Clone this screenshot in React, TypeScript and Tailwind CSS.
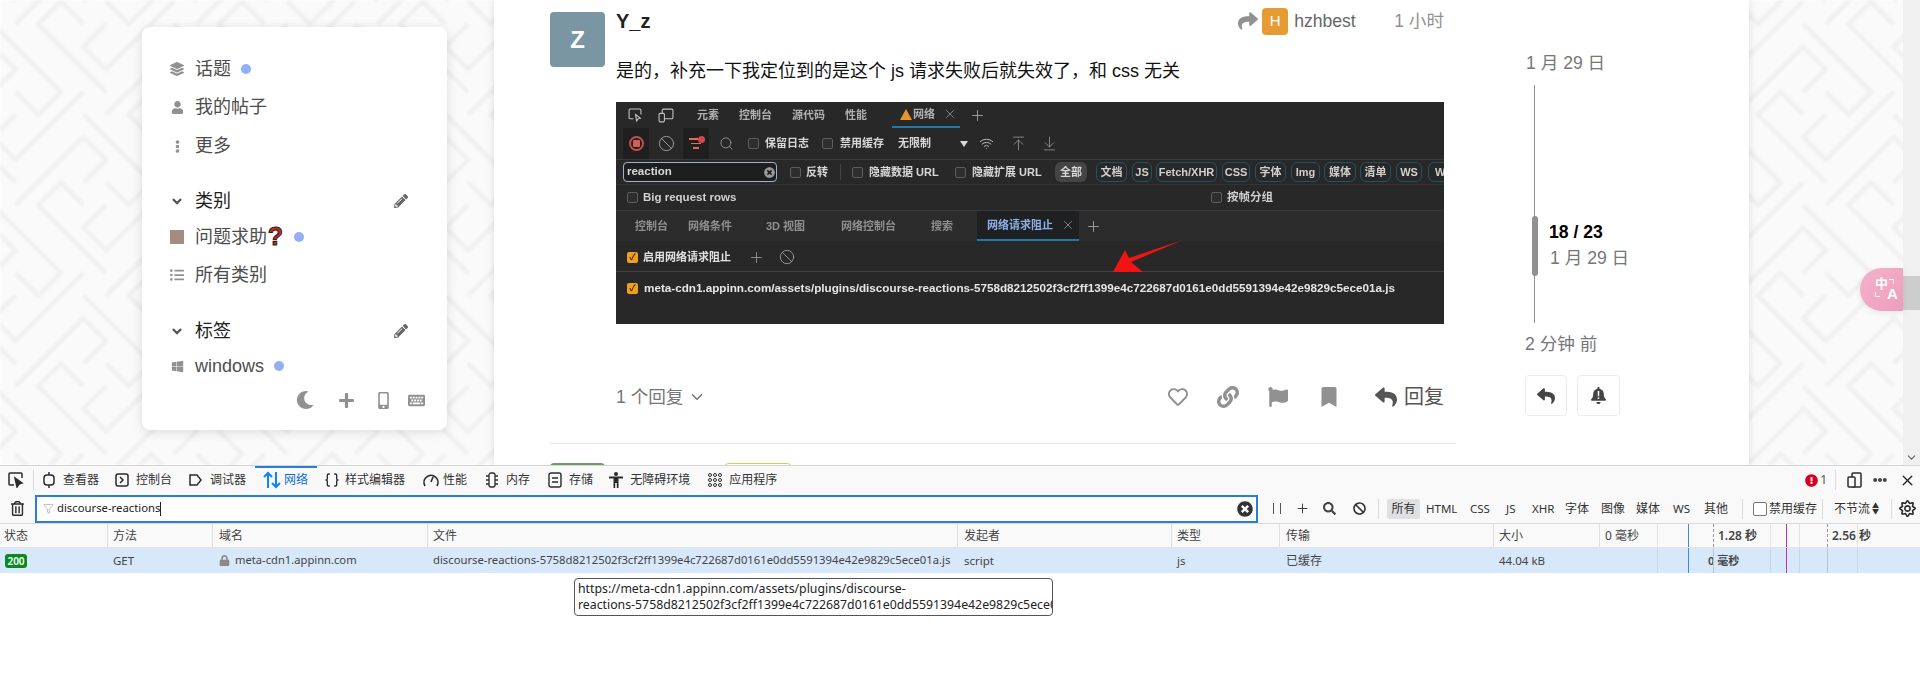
import React from "react";
import {
  FaLayerGroup, FaUser, FaEllipsisV, FaAngleDown, FaPencilAlt, FaListUl, FaWindows, FaMoon, FaPlus,
  FaMobileAlt, FaKeyboard, FaShare, FaRegHeart, FaLink, FaFlag, FaBookmark, FaReply, FaBell, FaLock, FaRegSun, FaRegTrashAlt,
  FaSearch, FaBan, FaEllipsisH, FaExclamationCircle, FaTimesCircle,
} from "react-icons/fa";
import { Plus, X, Search, Ban, ArrowUpToLine, ArrowDownToLine, Wifi, Filter, Braces, ChevronDown } from "lucide-react";

const Dot = () => <span className="w-[10px] h-[10px] rounded-full bg-[#95aef8] shrink-0" />;

function NavRow({ icon, label, dot, mt, dark }: { icon: React.ReactNode; label: React.ReactNode; dot?: boolean; mt: string; dark?: boolean }) {
  return (
    <div className={`flex items-center h-[30px] ${mt}`}>
      <span className="w-[14px] flex justify-center text-[#919191] shrink-0">{icon}</span>
      <span className={`ml-[11px] text-[18px] leading-[30px] ${dark ? "text-[#222222]" : "text-[#4d4d4d]"}`}>{label}</span>
      {dot && <span className="ml-[10px] flex"><Dot /></span>}
    </div>
  );
}

function Sidebar() {
  return (
    <aside className="w-[305px] h-[403px] mt-[27px] bg-white rounded-[8px] shadow-[0_2px_12px_rgba(0,0,0,0.12)] shrink-0 pl-[28px] pr-[39px] pt-[27px] flex flex-col relative z-10">
      <NavRow mt="" icon={<FaLayerGroup size={14} />} label="话题" dot />
      <NavRow mt="mt-[8px]" icon={<FaUser size={13} />} label="我的帖子" />
      <NavRow mt="mt-[9px]" icon={<FaEllipsisV size={13} />} label="更多" />
      <div className="flex items-center justify-between h-[30px] mt-[25px]">
        <div className="flex items-center">
          <span className="w-[14px] flex justify-center text-[#555555]"><FaAngleDown size={15} /></span>
          <span className="ml-[11px] text-[18px] text-[#222222]">类别</span>
        </div>
        <FaPencilAlt size={14} className="text-[#666666]" />
      </div>
      <NavRow
        mt="mt-[6px]"
        icon={<span className="w-[14px] h-[14px] bg-[#a48c80] block" />}
        label={<>问题求助<span className="inline-block w-[17px] text-center font-bold text-[#c9261c] text-[25px] leading-[20px] [-webkit-text-stroke:1px_#222222] align-[-2px]">?</span></>}
        dot
      />
      <NavRow mt="mt-[8px]" icon={<FaListUl size={14} />} label="所有类别" />
      <div className="flex items-center justify-between h-[30px] mt-[26px]">
        <div className="flex items-center">
          <span className="w-[14px] flex justify-center text-[#555555]"><FaAngleDown size={15} /></span>
          <span className="ml-[11px] text-[18px] text-[#222222]">标签</span>
        </div>
        <FaPencilAlt size={14} className="text-[#666666]" />
      </div>
      <NavRow mt="mt-[5px]" icon={<FaWindows size={13} />} label="windows" dot />
      <div className="flex items-center justify-end text-[#919191] mt-[7px] -mr-[17px] h-[24px]">
        <FaMoon size={18} />
        <span className="ml-[24px]"><FaPlus size={17} /></span>
        <span className="ml-[20px]"><FaMobileAlt size={17} /></span>
        <span className="ml-[16px]"><FaKeyboard size={17} /></span>
      </div>
    </aside>
  );
}

const CB = ({ on, ml }: { on?: boolean; ml: string }) => (
  <span className={`${ml} w-[11px] h-[11px] rounded-[2px] shrink-0 flex items-center justify-center text-[9px] leading-none ${on ? "bg-[#f0a020] text-[#3a2800]" : "border border-[#5d5d5d] bg-[#2e2e2e]"}`}>{on ? "✓" : ""}</span>
);

function Chip({ w, ml, children }: { w: string; ml: string; children: React.ReactNode }) {
  return <span className={`${w} ${ml} h-[20px] shrink-0 rounded-[6px] border border-[#1f5365] flex items-center justify-center text-[#cfcfcf] font-semibold`}>{children}</span>;
}

function DarkShot() {
  return (
    <div className="w-[828px] h-[222px] bg-[#282828] text-[11px] text-[#b0b0b0] font-semibold overflow-hidden flex flex-col blur-[0.3px] relative">
      <div className="h-[26px] flex items-center shrink-0">
        <svg className="ml-[12px] shrink-0" width="14" height="14" viewBox="0 0 13 13" fill="none" stroke="#c4c4c4"><path d="M5 10H2a1 1 0 0 1-1-1V2a1 1 0 0 1 1-1h9a1 1 0 0 1 1 1v4" /><path d="M7 6l1 6 1.5-2 2-.5z" /></svg>
        <svg className="ml-[16px] shrink-0" width="16" height="15" viewBox="0 0 15 14" fill="none" stroke="#c4c4c4"><rect x="4" y="1" width="10" height="9" rx="1" /><rect x="1" y="5" width="5" height="8" rx="1" fill="#282828" /></svg>
        <span className="ml-[23px] w-[22px] shrink-0">元素</span>
        <span className="ml-[20px] w-[33px] shrink-0">控制台</span>
        <span className="ml-[20px] w-[33px] shrink-0">源代码</span>
        <span className="ml-[20px] w-[22px] shrink-0">性能</span>
        <div className="ml-[25px] w-[68px] h-full border-b-[2px] border-[#2279a8] pl-[8px] flex items-center shrink-0">
          <span className="w-0 h-0 border-l-[6px] border-r-[6px] border-b-[11px] border-l-transparent border-r-transparent border-b-[#e8942a]" />
          <span className="ml-[1px] w-[23px]">网络</span>
          <X size={14} className="ml-[7px] text-[#aaaaaa]" strokeWidth={1.2} />
        </div>
        <Plus size={17} className="ml-[9px] text-[#aaaaaa]" strokeWidth={1.2} />
      </div>
      <div className="h-[32px] flex items-center border-b border-[#3a3a3a] shrink-0">
        <span className="ml-[7px] w-[26px] h-full bg-[#1f1f1f] flex items-center justify-center shrink-0"><span className="w-[15px] h-[15px] rounded-full border-2 border-[#c2504a] flex items-center justify-center"><span className="w-[7px] h-[7px] bg-[#d0605a] rounded-[1px]" /></span></span>
        <Ban size={17} className="ml-[9px] text-[#aaaaaa] shrink-0" strokeWidth={1.2} />
        <span className="ml-[8px] w-[26px] h-full bg-[#1f1f1f] flex flex-col items-center justify-center gap-[3px] shrink-0 relative"><span className="w-[14px] h-[1.5px] bg-[#e26a5a]" /><span className="w-[10px] h-[1.5px] bg-[#e26a5a]" /><span className="w-[6px] h-[1.5px] bg-[#e26a5a]" /><span className="absolute right-[4px] top-[8px] w-[7px] h-[7px] rounded-full bg-[#d8484a]" /></span>
        <Search size={15} className="ml-[10px] text-[#aaaaaa] shrink-0" strokeWidth={1.2} />
        <CB ml="ml-[14px]" />
        <span className="ml-[6px] w-[45px] shrink-0 text-[#d8d8d8]">保留日志</span>
        <CB ml="ml-[12px]" />
        <span className="ml-[7px] w-[45px] shrink-0 text-[#d8d8d8]">禁用缓存</span>
        <span className="ml-[13px] w-[34px] shrink-0 text-[#d8d8d8]">无限制</span>
        <span className="ml-[28px] w-0 h-0 border-l-[4px] border-r-[4px] border-t-[6px] border-l-transparent border-r-transparent border-t-[#d8d8d8] shrink-0" />
        <Wifi size={15} className="ml-[11px] text-[#c0c0c0] shrink-0" strokeWidth={1.5} />
        <ArrowUpToLine size={17} className="ml-[16px] text-[#aaaaaa] shrink-0" strokeWidth={1} />
        <ArrowDownToLine size={17} className="ml-[14px] text-[#aaaaaa] shrink-0" strokeWidth={1} />
      </div>
      <div className="h-[25px] flex items-center shrink-0 border-b border-[#333333]">
        <span className="ml-[7px] w-[154px] h-[20px] shrink-0 rounded-[4px] border border-[#9fb3cf] bg-[#1e1e1e] pl-[3px] pr-[1px] flex items-center justify-between text-[#d8d8d8] text-[11.5px]">reaction<FaTimesCircle size={11} className="text-[#9a9a9a]" /></span>
        <CB ml="ml-[13px]" />
        <span className="ml-[5px] w-[23px] shrink-0 text-[#d8d8d8]">反转</span>
        <span className="ml-[11px] w-px h-[16px] bg-[#444444] shrink-0" />
        <CB ml="ml-[11px]" />
        <span className="ml-[6px] w-[72px] shrink-0 text-[#d8d8d8] whitespace-nowrap">隐藏数据 URL</span>
        <CB ml="ml-[14px]" />
        <span className="ml-[6px] w-[72px] shrink-0 text-[#d8d8d8] whitespace-nowrap">隐藏扩展 URL</span>
        <span className="ml-[11px] w-[32px] h-[20px] shrink-0 rounded-[6px] bg-[#454545] flex items-center justify-center text-[#d8d8d8]">全部</span>
        <Chip ml="ml-[9px]" w="w-[31px]">文档</Chip>
        <Chip ml="ml-[5px]" w="w-[20px]">JS</Chip>
        <Chip ml="ml-[4px]" w="w-[61px]">Fetch/XHR</Chip>
        <Chip ml="ml-[5px]" w="w-[28px]">CSS</Chip>
        <Chip ml="ml-[5px]" w="w-[31px]">字体</Chip>
        <Chip ml="ml-[5px]" w="w-[29px]">Img</Chip>
        <Chip ml="ml-[4px]" w="w-[32px]">媒体</Chip>
        <Chip ml="ml-[4px]" w="w-[31px]">清单</Chip>
        <Chip ml="ml-[5px]" w="w-[26px]">WS</Chip>
        <Chip ml="ml-[6px]" w="w-[30px]">Wa</Chip>
      </div>
      <div className="h-[26px] flex items-center shrink-0 border-b border-[#3a3a3a] text-[#d0d0d0] text-[11.5px]">
        <CB ml="ml-[11px]" />
        <span className="ml-[5px] w-[568px] shrink-0">Big request rows</span>
        <CB ml="ml-0" />
        <span className="ml-[5px] shrink-0">按帧分组</span>
      </div>
      <div className="h-[30px] flex items-center shrink-0 bg-[#2c2c2c] text-[#8f8f8f]">
        <span className="ml-[19px] w-[33px] shrink-0">控制台</span>
        <span className="ml-[20px] w-[44px] shrink-0">网络条件</span>
        <span className="ml-[34px] w-[42px] shrink-0 whitespace-nowrap">3D 视图</span>
        <span className="ml-[33px] w-[56px] shrink-0">网络控制台</span>
        <span className="ml-[34px] w-[23px] shrink-0">搜索</span>
        <div className="ml-[23px] w-[102px] h-full shrink-0 bg-[#1f2022] border-b-[2px] border-[#2279a8] pl-[10px] flex items-center text-[#8db0ea]">
          <span className="w-[67px] shrink-0">网络请求阻止</span>
          <X size={14} className="ml-[7px] text-[#aaaaaa] shrink-0" strokeWidth={1.2} />
        </div>
        <Plus size={17} className="ml-[6px] text-[#aaaaaa] shrink-0" strokeWidth={1.2} />
      </div>
      <div className="h-[31px] flex items-center shrink-0 border-b border-[#444444] pt-[2px]">
        <CB on ml="ml-[11px]" />
        <span className="ml-[5px] w-[91px] shrink-0 text-[#e0e0e0]">启用网络请求阻止</span>
        <Plus size={17} className="ml-[14px] text-[#999999] shrink-0" strokeWidth={1.2} />
        <Ban size={16} className="ml-[14px] text-[#aaaaaa] shrink-0" strokeWidth={1.2} />
      </div>
      <div className="flex items-center h-[26px] shrink-0 text-[#e6e6e6] mt-[3px]">
        <CB on ml="ml-[11px]" />
        <span className="ml-[6px] whitespace-nowrap text-[11.7px]">meta-cdn1.appinn.com/assets/plugins/discourse-reactions-5758d8212502f3cf2ff1399e4c722687d0161e0dd5591394e42e9829c5ece01a.js</span>
      </div>
      <svg className="absolute left-[495px] top-[136px]" width="75" height="36" viewBox="0 0 75 36"><path d="M72 2 L20 24 L32 34 L2 34 L14 12 L18 20 Z" fill="#f01414" /></svg>
    </div>
  );
}

function Post() {
  return (
    <div className="w-[906px] ml-[56px] shrink-0">
      <div className="flex">
        <div className="w-[55px] h-[55px] mt-[12px] rounded-[4px] bg-[#7a96a3] text-white text-[24px] font-bold flex items-center justify-center shrink-0">Z</div>
        <div className="ml-[11px] w-[828px]">
          <div className="h-[42px] flex items-center">
            <span className="font-bold text-[20px] text-[#222222]">Y_z</span>
            <FaShare size={20} className="ml-auto text-[#919191]" />
            <span className="ml-[4px] w-[26px] h-[27px] bg-[#e79b35] rounded-[4px] text-white text-[15px] flex items-center justify-center">H</span>
            <span className="ml-[6px] w-[100px] text-[17.6px] text-[#666666]">hzhbest</span>
            <span className="text-[17.6px] text-[#919191] whitespace-nowrap">1 小时</span>
          </div>
          <p className="mt-[16px] leading-[26px] text-[18px] text-[#111111] whitespace-nowrap">是的，补充一下我定位到的是这个 js 请求失败后就失效了，和 css 无关</p>
          <div className="mt-[18px]"><DarkShot /></div>
          <div className="mt-[53px] h-[40px] flex items-center">
            <span className="text-[17.6px] text-[#777777]">1 个回复</span>
            <ChevronDown size={18} className="ml-[5px] text-[#777777]" />
            <FaRegHeart size={20} className="ml-auto text-[#919191]" />
            <FaLink size={22} className="ml-[29px] text-[#919191]" />
            <FaFlag size={20} className="ml-[29px] text-[#919191]" />
            <FaBookmark size={20} className="ml-[31px] text-[#919191]" />
            <FaReply size={22} className="ml-[36px] text-[#555555]" />
            <span className="ml-[7px] text-[20px] text-[#555555]">回复</span>
          </div>
        </div>
      </div>
      <div className="mt-[26px] h-px bg-[#e5e5e5]" />
      <div className="mt-[19px] flex items-start">
        <div className="w-[55px] h-[55px] rounded-[4px] bg-[#6f9a6a] shrink-0" />
        <span className="ml-[11px] w-[20px] font-bold text-[20px] leading-[24px] text-[#222222] shrink-0">Si</span>
        <span className="ml-[87px] w-[70px] h-[24px] border border-[#e6c84f] rounded-[6px] shrink-0" />
        <span className="ml-auto mr-[12px] text-[17.6px] leading-[24px] text-[#919191]">1 小时</span>
      </div>
    </div>
  );
}

function Timeline() {
  return (
    <div className="ml-[69px] w-[140px] pt-[50px] text-[17.6px] text-[#777777] shrink-0 flex flex-col">
      <span className="h-[26px] leading-[26px] pl-px whitespace-nowrap">1 月 29 日</span>
      <div className="ml-[9px] mt-[9px] h-[238px] w-px bg-[#919191] relative">
        <span className="absolute -left-[2.5px] top-[131px] w-[6px] h-[60px] rounded-full bg-[#919191]" />
        <span className="absolute left-[15px] top-[135px] font-bold text-[#000000] whitespace-nowrap leading-[24px]">18 / 23</span>
        <span className="absolute left-[16px] top-[160px] whitespace-nowrap leading-[26px]">1 月 29 日</span>
      </div>
      <span className="mt-[8px] h-[26px] leading-[26px] whitespace-nowrap">2 分钟 前</span>
      <div className="mt-[18px] flex gap-[10px]">
        <span className="w-[42px] h-[41px] border border-[#ececec] rounded-[4px] flex items-center justify-center text-[#444444]"><FaReply size={18} /></span>
        <span className="w-[43px] h-[41px] border border-[#ececec] rounded-[4px] flex items-center justify-center text-[#444444] relative"><FaBell size={17} /><span className="absolute text-white text-[10px] font-bold leading-none">!</span></span>
      </div>
    </div>
  );
}

function Pattern() {
  const a = "M0 16H96V48H64";
  return (
    <svg className="absolute inset-0 blur-[1px]" width="1920" height="465">
      <defs>
        <pattern id="saya" width="128" height="128" patternUnits="userSpaceOnUse" patternTransform="rotate(45) translate(12 6)">
          <g fill="none" stroke="#f0f0f0" strokeWidth="4.5">
            <path d={a} />
            <path d={a} transform="rotate(90 64 64)" />
            <path d={a} transform="rotate(180 64 64)" />
            <path d={a} transform="rotate(270 64 64)" />
          </g>
        </pattern>
      </defs>
      <rect width="1920" height="465" fill="#fafafa" />
      <rect width="1920" height="465" fill="url(#saya)" />
    </svg>
  );
}

function TopPage() {
  return (
    <div className="h-[465px] relative overflow-hidden flex pl-[142px] shrink-0">
      <Pattern />
      <Sidebar />
      <main className="ml-[47px] w-[1255px] h-full bg-white shadow-[0_0_8px_rgba(0,0,0,0.12)] flex shrink-0 relative z-10">
        <Post />
        <Timeline />
      </main>
      <div className="ml-auto w-[17px] h-full bg-[#f0f0f0] relative z-10 flex flex-col items-center shrink-0">
        <span className="mt-[276px] w-full h-[34px] bg-[#cdcdcd]" />
        <ChevronDown size={13} className="mt-auto mb-[1px] text-[#606060]" />
        <span className="absolute right-[17px] top-[268px] w-[43px] h-[43px] rounded-l-full bg-gradient-to-br from-[#f4b3ca] to-[#ee9dbb] text-white font-bold shadow-[0_2px_6px_rgba(0,0,0,0.08)]">
          <span className="absolute left-[15px] top-[9px] text-[13px] leading-[14px]">中</span>
          <span className="absolute left-[27px] top-[18px] text-[15px] leading-[16px]">A</span>
          <span className="absolute left-[29px] top-[11px] w-[5px] h-[5px] border-t border-r border-white rounded-tr-[2px]" />
          <span className="absolute left-[15px] top-[24px] w-[5px] h-[5px] border-b border-l border-white rounded-bl-[2px]" />
        </span>
      </div>
    </div>
  );
}

function Tab({ icon, label, iconMl, textMl, blue }: { icon: React.ReactNode; label: string; iconMl: string; textMl: string; blue?: boolean }) {
  return (
    <>
      <span className={`${iconMl} shrink-0 flex ${blue ? "text-[#0a84ff]" : "text-[#2b2b2b]"}`}>{icon}</span>
      <span className={`${textMl} shrink-0 whitespace-nowrap ${blue ? "text-[#0a6fd0]" : "text-[#333333]"}`}>{label}</span>
    </>
  );
}

const Sep = ({ ml }: { ml: string }) => <span className={`${ml} w-px h-[20px] bg-[#dcdcdc] shrink-0`} />;

function DevTools() {
  return (
    <div className="flex-1 flex flex-col text-[12px] text-[#333333] [font-family:'Noto_Sans','Noto_Sans_CJK_SC',sans-serif] relative">
      <div className="h-[29px] bg-[#f9f9fa] border-t border-[#d4d4d4] flex items-center relative shrink-0">
        <svg className="ml-[8px] shrink-0" width="16" height="16" viewBox="0 0 16 16" fill="none" stroke="#2b2b2b" strokeWidth="1.5"><path d="M6 13H2a1 1 0 0 1-1-1V2a1 1 0 0 1 1-1h11a1 1 0 0 1 1 1v4" /><path d="M7 6l2 9 2-3 3-1z" fill="#2b2b2b" /></svg>
        <span className="ml-[9px] w-px h-[20px] bg-[#dcdcdc] shrink-0" />
        <Tab iconMl="ml-[8px]" textMl="ml-[7px]" label="查看器" icon={<svg width="14" height="16" viewBox="0 0 14 16" fill="none" stroke="currentColor" strokeWidth="1.5"><rect x="2" y="3" width="10" height="10" rx="3" /><path d="M7 0v3M7 13v3" /></svg>} />
        <Tab iconMl="ml-[16px]" textMl="ml-[7px]" label="控制台" icon={<svg width="14" height="14" viewBox="0 0 14 14" fill="none" stroke="currentColor" strokeWidth="1.5"><rect x="1" y="1" width="12" height="12" rx="2" /><path d="M5 4l3 3-3 3" /></svg>} />
        <Tab iconMl="ml-[17px]" textMl="ml-[8px]" label="调试器" icon={<svg width="13" height="12" viewBox="0 0 13 12" fill="none" stroke="currentColor" strokeWidth="1.5"><path d="M1 1h7l4 5-4 5H1z" /></svg>} />
        <Tab blue iconMl="ml-[16px]" textMl="ml-[2px]" label="网络" icon={<svg width="20" height="18" viewBox="0 0 20 18" fill="none" stroke="currentColor" strokeWidth="2"><path d="M6 17V2M2 6l4-4 4 4M14 1v15M10 12l4 4 4-4" /></svg>} />
        <Tab iconMl="ml-[16px]" textMl="ml-[5px]" label="样式编辑器" icon={<Braces size={16} strokeWidth={2} />} />
        <Tab iconMl="ml-[17px]" textMl="ml-[3px]" label="性能" icon={<svg width="18" height="16" viewBox="0 0 18 16" fill="none" stroke="currentColor" strokeWidth="1.6"><path d="M3 14a7 7 0 1 1 12 0" /><path d="M9 10l2-5" /></svg>} />
        <Tab iconMl="ml-[18px]" textMl="ml-[7px]" label="内存" icon={<svg width="14" height="16" viewBox="0 0 14 16" fill="none" stroke="currentColor" strokeWidth="1.3"><rect x="4" y="1" width="6" height="14" rx="2" /><path d="M1 4h3M1 8h3M1 12h3M10 4h3M10 8h3M10 12h3" /></svg>} />
        <Tab iconMl="ml-[18px]" textMl="ml-[7px]" label="存储" icon={<svg width="14" height="16" viewBox="0 0 14 16" fill="none" stroke="currentColor" strokeWidth="1.4"><rect x="1" y="1" width="12" height="14" rx="2" /><path d="M4 6h6M4 10h6" /></svg>} />
        <Tab iconMl="ml-[16px]" textMl="ml-[7px]" label="无障碍环境" icon={<svg width="14" height="16" viewBox="0 0 14 16" fill="currentColor"><circle cx="7" cy="2" r="2" /><path d="M0 4.5h14V6.5H9.5V16H7.8v-5H6.2v5H4.5V6.5H0z" /></svg>} />
        <Tab iconMl="ml-[18px]" textMl="ml-[7px]" label="应用程序" icon={<svg width="14" height="14" viewBox="0 0 14 14" fill="none" stroke="currentColor"><circle cx="2" cy="2" r="1.5" /><circle cx="7" cy="2" r="1.5" /><circle cx="12" cy="2" r="1.5" /><circle cx="2" cy="7" r="1.5" /><circle cx="7" cy="7" r="1.5" /><circle cx="12" cy="7" r="1.5" /><circle cx="2" cy="12" r="1.5" /><circle cx="7" cy="12" r="1.5" /><circle cx="12" cy="12" r="1.5" /></svg>} />
        <span className="absolute left-[255px] top-0 w-[62px] h-[2px] bg-[#2a7fd4]" />
        <div className="ml-auto flex items-center pr-[4px] shrink-0">
          <FaExclamationCircle size={13} className="text-[#d70022]" />
          <span className="ml-[2px] text-[#555555]">1</span>
          <Sep ml="ml-[8px]" />
          <svg className="ml-[11px]" width="15" height="16" viewBox="0 0 15 16" fill="none" stroke="#2b2b2b" strokeWidth="1.5"><rect x="5" y="1" width="9" height="14" rx="1" /><rect x="1" y="5" width="7" height="10" rx="1" fill="#f9f9fa" /></svg>
          <FaEllipsisH size={14} className="ml-[11px] text-[#444444]" />
          <X size={17} className="ml-[12px] text-[#2b2b2b]" strokeWidth={2} />
        </div>
      </div>
      <div className="h-[30px] bg-[#f9f9fa] flex items-center border-b border-[#dcdcdc] shrink-0">
        <FaRegTrashAlt size={15} className="ml-[10px] text-[#2b2b2b] shrink-0" />
        <div className="ml-[10px] w-[1223px] h-[28px] border-2 border-[#2a7fd4] bg-white flex items-center pl-[6px] pr-[3px] shrink-0">
          <Filter size={11} className="text-[#888888]" strokeWidth={1.2} />
          <span className="ml-[3px] text-[#222222] text-[11.3px]">discourse-reactions</span>
          <span className="w-px h-[14px] bg-[#222222]" />
          <FaTimesCircle size={16} className="ml-auto text-[#333333]" />
        </div>
        <span className="ml-[15px] w-[8px] h-[11px] border-l border-r border-[#555555] shrink-0" />
        <Plus size={15} className="ml-[14px] text-[#333333] shrink-0" strokeWidth={1.5} />
        <FaSearch size={13} className="ml-[13px] text-[#444444] shrink-0" />
        <FaBan size={13} className="ml-[17px] text-[#333333] shrink-0" />
        <Sep ml="ml-[12px]" />
        <span className="ml-[8px] w-[33px] h-[20px] bg-[#e0e0e2] rounded-[2px] flex items-center justify-center shrink-0">所有</span>
        <span className="ml-[6px] w-[31px] shrink-0 text-[11.5px]">HTML</span>
        <span className="ml-[13px] w-[20px] shrink-0 text-[11.5px]">CSS</span>
        <span className="ml-[16px] w-[11px] shrink-0 text-[11.5px]">JS</span>
        <span className="ml-[15px] w-[24px] shrink-0 text-[11.5px]">XHR</span>
        <span className="ml-[9px] w-[24px] shrink-0">字体</span>
        <span className="ml-[12px] w-[24px] shrink-0">图像</span>
        <span className="ml-[11px] w-[24px] shrink-0">媒体</span>
        <span className="ml-[13px] w-[18px] shrink-0 text-[11.5px]">WS</span>
        <span className="ml-[13px] w-[24px] shrink-0">其他</span>
        <Sep ml="ml-[14px]" />
        <span className="ml-[10px] w-[14px] h-[14px] border border-[#777777] rounded-[2px] bg-white shrink-0" />
        <span className="ml-[2px] w-[48px] shrink-0">禁用缓存</span>
        <Sep ml="ml-[5px]" />
        <span className="ml-[11px] w-[38px] shrink-0 whitespace-nowrap">不节流</span>
        <span className="text-[7px] leading-[6px] flex flex-col shrink-0"><span>▲</span><span>▼</span></span>
        <Sep ml="ml-[12px]" />
        <FaRegSun size={17} className="ml-[7px] text-[#2b2b2b] shrink-0" />
      </div>
      <div className="grid grid-cols-[108px_105px_215px_530px_214px_108px_214px_106px_1fr] h-[24px] bg-[#f9f9fa] items-center border-b border-[#e4e4e4] shrink-0 text-[#444444] relative">
        <span className="pl-[4px] border-r border-[#e0e0e0] leading-[23px]">状态</span>
        <span className="pl-[5px] border-r border-[#e0e0e0] leading-[23px]">方法</span>
        <span className="pl-[6px] border-r border-[#e0e0e0] leading-[23px]">域名</span>
        <span className="pl-[5px] border-r border-[#e0e0e0] leading-[23px]">文件</span>
        <span className="pl-[6px] border-r border-[#e0e0e0] leading-[23px]">发起者</span>
        <span className="pl-[5px] border-r border-[#e0e0e0] leading-[23px]">类型</span>
        <span className="pl-[6px] border-r border-[#e0e0e0] leading-[23px]">传输</span>
        <span className="pl-[5px] border-r border-[#e0e0e0] leading-[23px]">大小</span>
        <div className="relative h-full leading-[23px]">
          <span className="absolute left-[5px]">0 毫秒</span>
          <span className="absolute left-[118px] font-semibold">1.28 秒</span>
          <span className="absolute left-[232px] font-semibold">2.56 秒</span>
          <span className="absolute left-[57px] top-0 h-full w-px bg-[#e4e4e4]" />
          <span className="absolute left-[88px] top-0 h-full w-px bg-[#3b8fd9]" />
          <span className="absolute left-[113px] top-0 h-full border-l border-dashed border-[#999999]" />
          <span className="absolute left-[170px] top-0 h-full w-px bg-[#e4e4e4]" />
          <span className="absolute left-[186px] top-0 h-full w-px bg-[#c530b0]" />
          <span className="absolute left-[199px] top-0 h-full w-px bg-[#e4e4e4]" />
          <span className="absolute left-[227px] top-0 h-full border-l border-dashed border-[#999999]" />
          <span className="absolute left-[257px] top-0 h-full w-px bg-[#e4e4e4]" />
        </div>
      </div>
      <div className="grid grid-cols-[108px_105px_215px_530px_214px_108px_214px_106px_1fr] h-[25px] bg-[#d7e8fb] items-center shrink-0 text-[#444444]">
        <span className="pl-[5px]"><span className="w-[22px] h-[14px] bg-[#0a8a1e] text-white rounded-[3px] text-[10px] font-semibold flex items-center justify-center leading-none">200</span></span>
        <span className="pl-[5px] text-[11.5px]">GET</span>
        <span className="pl-[6px] flex items-center whitespace-nowrap"><FaLock size={11} className="text-[#8a8a8a]" /><span className="ml-[5px] text-[11.2px]">meta-cdn1.appinn.com</span></span>
        <span className="pl-[5px] whitespace-nowrap overflow-hidden text-[11.27px]">discourse-reactions-5758d8212502f3cf2ff1399e4c722687d0161e0dd5591394e42e9829c5ece01a.js</span>
        <span className="pl-[6px] text-[11.5px]">script</span>
        <span className="pl-[5px] text-[11.5px]">js</span>
        <span className="pl-[6px]">已缓存</span>
        <span className="pl-[5px] text-[11.5px]">44.04 kB</span>
        <div className="relative h-full leading-[25px]">
          <span className="absolute left-[108px] font-semibold text-[11px]">0 毫秒</span>
          <span className="absolute left-[57px] top-0 h-full w-px bg-[#c5d6ea]" />
          <span className="absolute left-[88px] top-0 h-full w-px bg-[#3b8fd9]" />
          <span className="absolute left-[113px] top-0 h-full w-px bg-[#b5c6da]" />
          <span className="absolute left-[170px] top-0 h-full w-px bg-[#c5d6ea]" />
          <span className="absolute left-[186px] top-0 h-full w-px bg-[#c530b0]" />
          <span className="absolute left-[199px] top-0 h-full w-px bg-[#c5d6ea]" />
          <span className="absolute left-[227px] top-0 h-full w-px bg-[#b5c6da]" />
          <span className="absolute left-[257px] top-0 h-full w-px bg-[#c5d6ea]" />
        </div>
      </div>
      <div className="absolute left-[574px] top-[113px] w-[479px] h-[38px] bg-white border border-[#555555] rounded-[4px] px-[3px] text-[12.3px] leading-[16px] pt-[2px] overflow-hidden whitespace-nowrap text-[#222222]">
        <div>https://meta-cdn1.appinn.com/assets/plugins/discourse-</div>
        <div>reactions-5758d8212502f3cf2ff1399e4c722687d0161e0dd5591394e42e9829c5ece01a.js</div>
      </div>
    </div>
  );
}

export default function App() {
  return (
    <div className="w-[1920px] h-[693px] overflow-hidden bg-white flex flex-col [font-family:'Liberation_Sans','Noto_Sans_CJK_SC',sans-serif]">
      <TopPage />
      <DevTools />
    </div>
  );
}
